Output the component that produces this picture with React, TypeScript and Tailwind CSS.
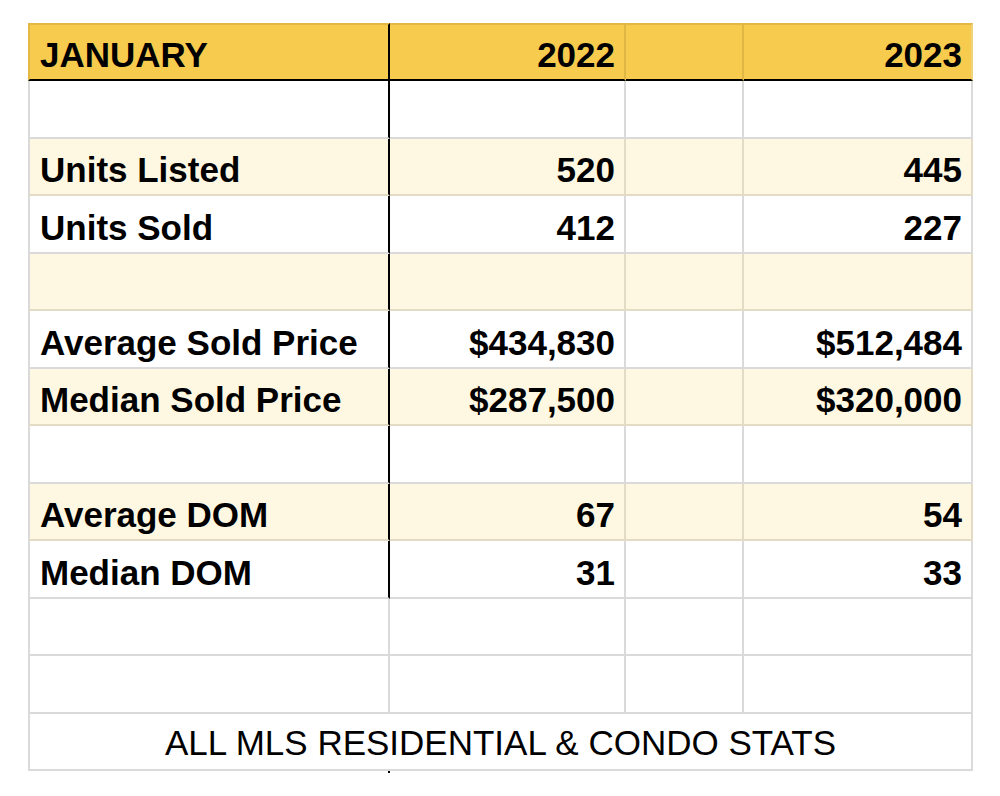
import React from "react"

type Row = {
  label?: string
  a?: string
  b?: string
  beige?: boolean
}

const rows: Row[] = [
  {},
  { label: "Units Listed", a: "520", b: "445", beige: true },
  { label: "Units Sold", a: "412", b: "227" },
  { beige: true },
  { label: "Average Sold Price", a: "$434,830", b: "$512,484" },
  { label: "Median Sold Price", a: "$287,500", b: "$320,000", beige: true },
  {},
  { label: "Average DOM", a: "67", b: "54", beige: true },
  { label: "Median DOM", a: "31", b: "33" },
]

export default function App() {
  return (
    <div className="min-h-screen bg-white pl-[28px] pt-[23px] font-['Liberation_Sans',Arial,sans-serif] text-black">
      <div className="grid w-[945px] grid-cols-[362px_236px_118px_229px] grid-rows-[58px_repeat(12,57.5px)] text-[35px] leading-[40px]">
        {/* Header */}
        <div className="flex items-end border-t-2 border-l-2 border-b-2 border-r-2 border-t-[#e3b845] border-l-[#e3b845] border-b-black border-r-black bg-[#f7cb4d] px-[10px] pb-[4px] font-bold">
          JANUARY
        </div>
        <div className="flex items-end justify-end border-t-2 border-b-2 border-r-2 border-t-[#e3b845] border-b-black border-r-[#e0b645] bg-[#f7cb4d] pr-[9px] pb-[4px] font-bold">
          2022
        </div>
        <div className="border-t-2 border-b-2 border-r-2 border-t-[#e3b845] border-b-black border-r-[#e0b645] bg-[#f7cb4d]" />
        <div className="flex items-end justify-end border-t-2 border-b-2 border-r-2 border-t-[#e3b845] border-b-black border-r-[#f0d27a] bg-[#f7cb4d] pr-[9px] pb-[4px] font-bold">
          2023
        </div>

        {/* Data rows */}
        {rows.map((r, i) => {
          const bg = r.beige ? "bg-[#fef7e1]" : "bg-white"
          const line = r.beige ? "border-b-[#e4dbc4] border-r-[#e4dbc4]" : "border-b-[#dadada] border-r-[#dadada]"
          return (
            <React.Fragment key={i}>
              <div
                className={`flex items-end border-b-2 border-l-2 border-r-2 border-l-[#dadada] ${r.beige ? "border-b-[#e4dbc4]" : "border-b-[#dadada]"} border-r-black ${bg} px-[10px] pb-[4px] font-bold`}
              >
                {r.label}
              </div>
              <div className={`flex items-end justify-end border-b-2 border-r-2 ${line} ${bg} pr-[9px] pb-[4px] font-bold`}>
                {r.a}
              </div>
              <div className={`border-b-2 border-r-2 ${line} ${bg}`} />
              <div className={`flex items-end justify-end border-b-2 border-r-2 ${line} ${bg} pr-[9px] pb-[4px] font-bold`}>
                {r.b}
              </div>
            </React.Fragment>
          )
        })}

        {/* Empty rows */}
        {[0, 1].map((i) => (
          <React.Fragment key={`e${i}`}>
            <div className="border-b-2 border-l-2 border-r-2 border-[#dadada] bg-white" />
            <div className="border-b-2 border-r-2 border-[#dadada] bg-white" />
            <div className="border-b-2 border-r-2 border-[#dadada] bg-white" />
            <div className="border-b-2 border-r-2 border-[#dadada] bg-white" />
          </React.Fragment>
        ))}

        {/* Footer */}
        <div className="col-span-4 flex items-end justify-center border-b-2 border-l-2 border-r-2 border-[#dadada] bg-white pb-[6px]">
          ALL MLS RESIDENTIAL &amp; CONDO STATS
        </div>
      </div>
      <div className="ml-[360px] h-[2px] w-[2px] bg-black" />
    </div>
  )
}
